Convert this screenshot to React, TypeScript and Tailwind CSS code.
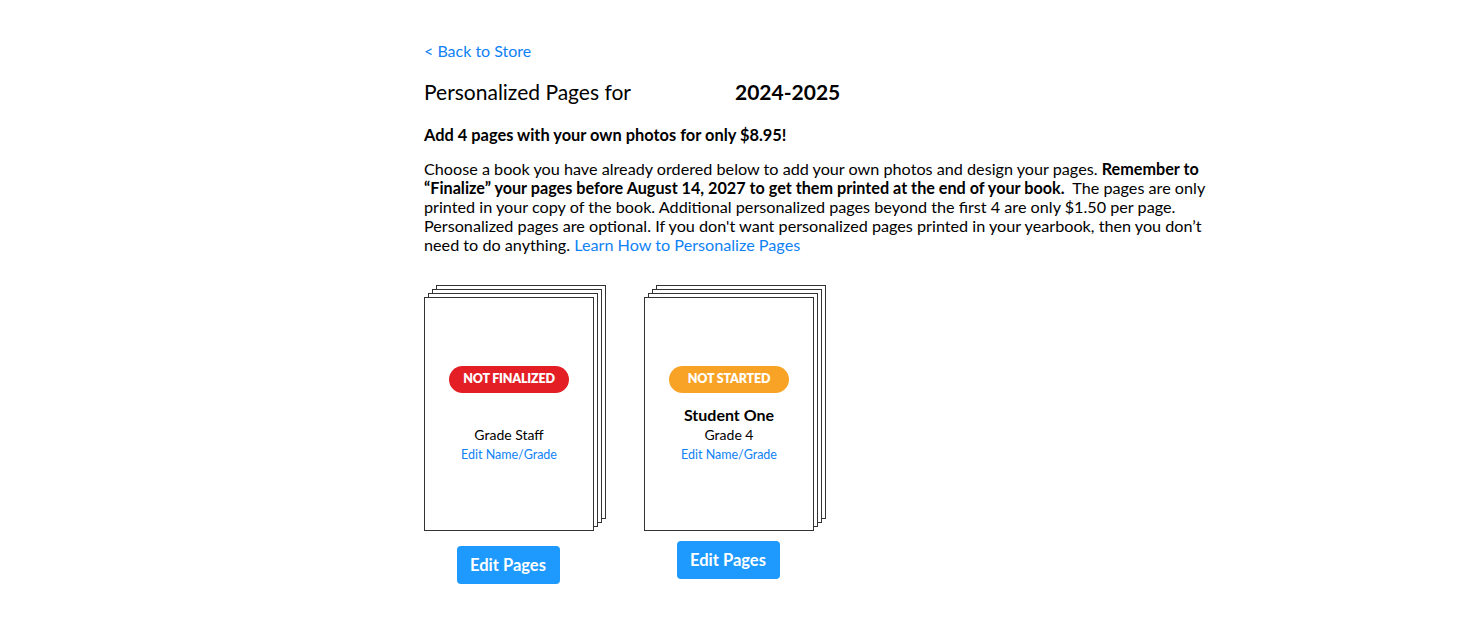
import React from "react";

type Book = {
  status: string;
  badge: string;
  name?: string;
  grade: string;
  btnTop: string;
};

const books: Book[] = [
  { status: "NOT FINALIZED", badge: "bg-[#e31e24]", grade: "Grade Staff", btnTop: "mt-[15px]" },
  { status: "NOT STARTED", badge: "bg-[#f9a326]", name: "Student One", grade: "Grade 4", btnTop: "mt-[10px]" },
];

function BookStack({ book }: { book: Book }) {
  return (
    <div className="flex flex-col items-center w-[182px]">
      {/* stacked pages */}
      <div className="relative w-[182px] h-[246px]">
        <div className="absolute left-[12px] top-0 w-[170px] h-[234px] border border-[#333] bg-white" />
        <div className="absolute left-[8px] top-[4px] w-[170px] h-[234px] border border-[#333] bg-white" />
        <div className="absolute left-[4px] top-[8px] w-[170px] h-[234px] border border-[#333] bg-white" />
        <div className="absolute left-0 top-[12px] w-[170px] h-[234px] border border-[#333] bg-white flex flex-col items-center pt-[68px]">
          <div className={`${book.badge} w-[120px] h-[27px] rounded-full flex items-center justify-center text-white text-[12.5px] font-extrabold tracking-[-0.2px]`}>
            {book.status}
          </div>
          <div className="h-[24px] mt-[10px] text-[16px] font-bold text-black leading-[24px]">{book.name ?? ""}</div>
          <div className="text-[14px] text-black leading-[19px] -mt-[2px]">{book.grade}</div>
          <a href="#" className="text-[12.5px] text-[#0f82f5] leading-[21px]">Edit Name/Grade</a>
        </div>
      </div>
      <button className={`${book.btnTop} mr-[14px] w-[103px] h-[38px] rounded bg-[#1e9afe] text-white text-[16.5px] font-bold`}>
        Edit Pages
      </button>
    </div>
  );
}

export default function App() {
  return (
    <div className="min-h-screen bg-white font-['Lato','Liberation_Sans',sans-serif] text-black">
      <div className="pl-[424px] pt-[41px]">
        <a href="#" className="text-[16px] text-[#0f82f5] leading-[20px] block">&lt; Back to Store</a>

        <div className="mt-[18px] flex items-baseline text-[21px] leading-[26px]">
          <span>Personalized Pages for</span>
          <span className="ml-[104px] font-bold">2024-2025</span>
        </div>

        <p className="mt-[20px] text-[16.4px] font-bold leading-[20px]">Add 4 pages with your own photos for only $8.95!</p>

        <p className="mt-[14px] text-[16.2px] leading-[19px] whitespace-nowrap">
          Choose a book you have already ordered below to add your own photos and design your pages.{" "}
          <b>Remember to</b>
          <br />
          <b>“Finalize” your pages before August 14, 2027 to get them printed at the end of your book.</b>
          {"\u00a0 "}The pages are only
          <br />
          printed in your copy of the book. Additional personalized pages beyond the first 4 are only $1.50 per page.
          <br />
          Personalized pages are optional. If you don't want personalized pages printed in your yearbook, then you don’t
          <br />
          need to do anything.{" "}
          <a href="#" className="text-[#0f82f5]">Learn How to Personalize Pages</a>
        </p>

        <div className="mt-[31px] flex gap-[38px]">
          {books.map((b) => (
            <BookStack key={b.status} book={b} />
          ))}
        </div>
      </div>
    </div>
  );
}
